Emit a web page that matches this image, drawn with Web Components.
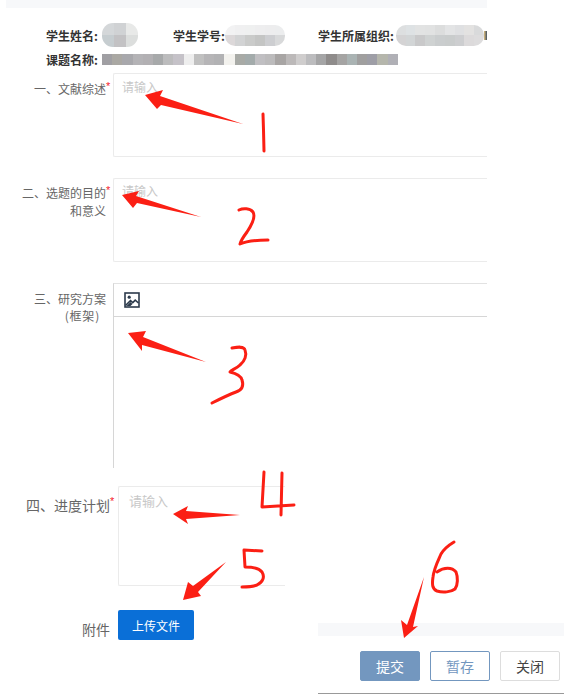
<!DOCTYPE html>
<html lang="zh">
<head>
<meta charset="utf-8">
<style>
html,body{margin:0;padding:0;background:#fff}
body{font-family:"Noto Sans CJK SC","Noto Sans",sans-serif}
</style>
</head>
<body>
<x-page>
  <x-info>
    <x-info-item slot="row1" width="127" gap="4"><span slot="label">学生姓名:</span><x-mosaic w="36" h="24" cols="3" radius="11" colors="d4d7d9,d0d2d4,e8e9e8,c6cdd0,c3c2c4,dcdedd"></x-mosaic></x-info-item>
    <x-info-item slot="row1" width="145" gap="0"><span slot="label">学生学号:</span><x-mosaic w="60" h="21" cols="6" radius="10" colors="f2f2f3,f0f0f1,eff0f0,eeeeef,ededee,ecedee,dcd8d9,d2d3d4,cacbca,c4c5c4,cdced1,d8d9da"></x-mosaic></x-info-item>
    <x-info-item slot="row1" width="169" gap="2"><span slot="label">学生所属组织:</span><x-mosaic w="88" h="21" cols="9" radius="10" colors="dddfe0,dee2e4,e2e3e3,e1e2e2,dcdddd,e3e4e5,dfe0e2,e3e2e1,d9dadb,d4d3d4,d2d5d6,c9c9ca,cfd2d2,cacdce,c9cccc,cdced0,dcdadb,dddcdd"></x-mosaic><x-clip></x-clip></x-info-item>
    <x-info-item slot="row2" width="440" gap="4"><span slot="label">课题名称:</span><x-mosaic w="296" h="11" cols="29" radius="0" colors="a09fa3,aaa8a3,a8a8ac,b4b3b6,b2b0b3,a7a9aa,bcbcbd,c5c2c8,eeeeee,c0c0c0,b6b5b7,b2b2b4,f3f2ee,a8aaa6,a3abab,c0bfc2,bcbbbc,a8a5a4,bcb9b9,cfcdcd,bcbcbe,a5a5a6,8f8c8b,a5a4a3,aab3b3,a09f9f,9e9ea6,b5b6ac,b0b0b6"></x-mosaic></x-info-item>
  </x-info>

  <x-field label-width="106" gap="7" top="8" height="84">
    <span slot="label">一、文献综述<x-req></x-req></span>
    <x-box placeholder="请输入"></x-box>
  </x-field>
  <x-field label-width="106" gap="7" top="21" height="84" pad="6">
    <span slot="label">二、选题的目的<x-req></x-req><br>和意义</span>
    <x-box placeholder="请输入" offset="4"></x-box>
  </x-field>
  <x-field label-width="106" gap="7" top="21" height="185" pad="7" lh="17">
    <span slot="label">三、研究方案<br><span style="letter-spacing:.8px;margin-right:6px">(框架)</span></span>
    <x-editor></x-editor>
  </x-field>

  <x-lower slot="lower">
    <x-field slot="main" label-width="110" gap="8" top="18" height="100" size="14" pad="9" width="285">
      <span slot="label">四、进度计划<x-req></x-req></span>
      <x-box placeholder="请输入" size="13" inset="10" offset="6"></x-box>
    </x-field>
    <x-attach slot="attach"></x-attach>
    <x-footer slot="footer"></x-footer>
  </x-lower>
  <x-ink slot="overlay"></x-ink>
</x-page>

<script>
function shadow(el, html){ el.attachShadow({mode:'open'}).innerHTML = html; }

customElements.define('x-page', class extends HTMLElement{
  constructor(){super();shadow(this,`<style>
    :host{display:block;position:relative;width:588px;height:694px;overflow:hidden;background:#fff;color:#666;font-size:12px}
    .sheet{width:487px;height:468px;overflow:hidden}
    .band{height:8px;margin-left:6px;background:#f7f8fa}
    .ov{position:absolute;inset:0;pointer-events:none}
  </style>
  <div class="sheet"><div class="band"></div><slot></slot></div>
  <slot name="lower"></slot>
  <div class="ov"><slot name="overlay"></slot></div>`);}
});

customElements.define('x-info', class extends HTMLElement{
  constructor(){super();shadow(this,`<style>
    :host{display:block;padding:15px 0 0 46px;color:#333;font-weight:700;font-size:12px}
    .r{display:flex;align-items:center}
    .a{height:24px}
    .b{height:12px;margin-top:6px}
  </style>
  <div class="r a"><slot name="row1"></slot></div>
  <div class="r b"><slot name="row2"></slot></div>`);}
});

customElements.define('x-info-item', class extends HTMLElement{
  constructor(){super();shadow(this,`<style>
    :host{display:flex;align-items:center;flex:none;white-space:nowrap;gap:${this.getAttribute('gap')}px;width:${this.getAttribute('width')}px}
  </style><slot name="label"></slot><slot></slot>`);}
});

customElements.define('x-clip', class extends HTMLElement{
  constructor(){super();shadow(this,`<style>
    :host{display:block;flex:none;width:3px;height:9px;margin-left:-2px;background:linear-gradient(90deg,#e0c080,#3f4f60)}
  </style>`);}
});

customElements.define('x-mosaic', class extends HTMLElement{
  constructor(){super();
    const w=+this.getAttribute('w'),h=+this.getAttribute('h'),n=+this.getAttribute('cols'),r=+this.getAttribute('radius');
    const cols=(this.getAttribute('colors')||'').split(',');
    const rows=Math.round(cols.length/n)||1;
    const cells=cols.map(x=>`<i style="background:#${x}"></i>`).join('');
    shadow(this,`<style>
      :host{display:block;flex:none;width:${w}px;height:${h}px}
      .g{display:grid;width:100%;height:100%;grid-template-columns:repeat(${n},1fr);grid-template-rows:repeat(${rows},1fr);border-radius:${r}px;overflow:hidden;filter:blur(.4px)}
    </style><div class="g">${cells}</div>`);
  }
});

customElements.define('x-req', class extends HTMLElement{
  constructor(){super();shadow(this,`<style>
    :host{display:inline-block;position:absolute;margin-top:-1px;color:#f5222d;font-size:11px;line-height:14px;font-family:"Liberation Sans",sans-serif}
  </style>*`);}
});

customElements.define('x-field', class extends HTMLElement{
  constructor(){super();
    const g=n=>this.getAttribute(n);
    shadow(this,`<style>
      :host{display:grid;grid-template-columns:${g('label-width')}px 1fr;column-gap:${g('gap')}px;margin-top:${g('top')}px;height:${g('height')}px;${g('width')?`width:${g('width')}px;`:''}}
      .l{text-align:right;color:#666;font-size:${g('size')||12}px;padding-top:${g('pad')||7}px;line-height:${g('lh')||(g('size')?20:18)}px;position:relative}
      .c{min-width:0;height:100%}
    </style><div class="l"><slot name="label"></slot></div><div class="c"><slot></slot></div>`);
  }
});

customElements.define('x-box', class extends HTMLElement{
  constructor(){super();
    const g=n=>this.getAttribute(n);
    shadow(this,`<style>
      :host{display:block;box-sizing:border-box;height:100%;border:1px solid #ebebeb;border-right:0;border-radius:2px 0 0 2px;background:#fff;padding:${g('offset')||5}px 0 0 ${g('inset')||8}px;color:#c8c8c8;font-size:${g('size')||12}px;line-height:16px}
    </style>${g('placeholder')}`);
  }
});

customElements.define('x-editor', class extends HTMLElement{
  constructor(){super();shadow(this,`<style>
    :host{display:block;box-sizing:border-box;height:100%;border-top:1px solid #e2e2e2;border-left:1px solid #d6d6d6}
    .bar{box-sizing:border-box;height:33px;border-bottom:1px solid #d6d6d6;padding:8px 0 0 10px}
    svg{display:block}
  </style>
  <div class="bar"><svg width="16" height="16" viewBox="0 0 16 16" fill="none">
    <rect x="1" y="1" width="14" height="14" stroke="#2c3a4b" stroke-width="1.6"/>
    <circle cx="5.2" cy="5.2" r="1.6" fill="#2c3a4b"/>
    <path d="M1.5 13.5 6.5 8.6 8.8 10.6 11.2 8.2 14.5 11" stroke="#2c3a4b" stroke-width="1.6"/>
    <path d="M2.5 14 6.5 10 8.5 12 6.5 14z" fill="#2c3a4b"/>
  </svg></div>`);}
});

customElements.define('x-lower', class extends HTMLElement{
  constructor(){super();shadow(this,`<style>
    :host{display:block;width:588px}
    .w{display:flex;align-items:flex-start}
    .left{width:318px;flex:none}
  </style>
  <slot name="main"></slot>
  <div class="w"><div class="left"><slot name="attach"></slot></div><slot name="footer"></slot></div>`);}
});

customElements.define('x-attach', class extends HTMLElement{
  constructor(){super();shadow(this,`<style>
    :host{display:flex;align-items:center;margin-top:24px;height:30px}
    .l{width:110px;text-align:right;font-size:14px;color:#666;margin-top:8px;margin-right:8px}
    .b{width:76px;height:30px;border-radius:2px;background:#0a6fd7;color:#fff;font-size:12px;display:flex;align-items:center;justify-content:center}
  </style><div class="l">附件</div><div class="b">上传文件</div>`);}
});

customElements.define('x-footer', class extends HTMLElement{
  constructor(){super();shadow(this,`<style>
    :host{display:block;width:246px;margin-top:37px}
    .band{height:13px;background:#f7f8fa}
    .btns{display:flex;justify-content:flex-end;gap:10px;margin-top:15px;padding-right:4px}
    .line{height:1px;background:#999;margin-top:12px}
    .b{box-sizing:border-box;width:60px;height:30px;border-radius:2px;font-size:14px;display:flex;align-items:center;justify-content:center;border:1px solid #ddd;background:#fff;color:#444}
    .p{background:#7397bf;border-color:#7397bf;color:#fff}
    .s{border-color:#7397bf;color:#7397bf}
  </style>
  <div class="band"></div>
  <div class="btns"><div class="b p">提交</div><div class="b s">暂存</div><div class="b">关闭</div></div>
  <div class="line"></div>`);}
});

customElements.define('x-ink', class extends HTMLElement{
  constructor(){super();shadow(this,`<style>
    :host{display:block;position:absolute;inset:0}
    svg{display:block}
    .a{fill:#fb1f14}
    .s{fill:none;stroke:#fb1f14;stroke-width:3;stroke-linecap:round;stroke-linejoin:round}
  </style>
  <svg width="588" height="694" viewBox="0 0 588 694">
    <polygon class="a" points="145,95 163,90 160,96 243,124 161,105 157,109"/>
    <polygon class="a" points="122,195 139,191 136,196 201,217 137,203 133,208"/>
    <polygon class="a" points="128,333 146,331 143,337 206,362 142,345 142,351"/>
    <polygon class="a" points="173,514 188,506 186,511 240,515 186,519 188,524"/>
    <polygon class="a" points="183,600 188,582 193,586 226,562 198,592 201,596"/>
    <polygon class="a" points="404,638 401,620 407,625 424,577 413,627 418,626"/>
    <path class="s" d="M263 114 263.5 130 264 151"/>
    <path class="s" d="M239 210C243 208 250 208 253 212 256 217 251 226 247 232 244 236 241 240 240 244 246 241 256 240 268 240"/>
    <path class="s" d="M232 348C238 347 244 346 245 350 247 355 245 361 240 365 236 369 231 370 230 372 234 373 241 375 242 380 244 386 242 390 236 392 228 395 218 400 212 403"/>
    <path class="s" d="M264 472 262 507 294 505M282 473 281 515"/>
    <path class="s" d="M262 551 244 550 245 567C252 567 259 568 262 572 265 577 263 582 257 585 252 587 246 587 242 587"/>
    <path class="s" d="M454 542C449 545 444 549 441 554 438 561 434 568 433 577 432 584 432 589 437 591 443 593 451 592 455 589 458 585 458 577 456 572 452 567 444 567 437 572"/>
  </svg>`);}
});
</script>
</body>
</html>
